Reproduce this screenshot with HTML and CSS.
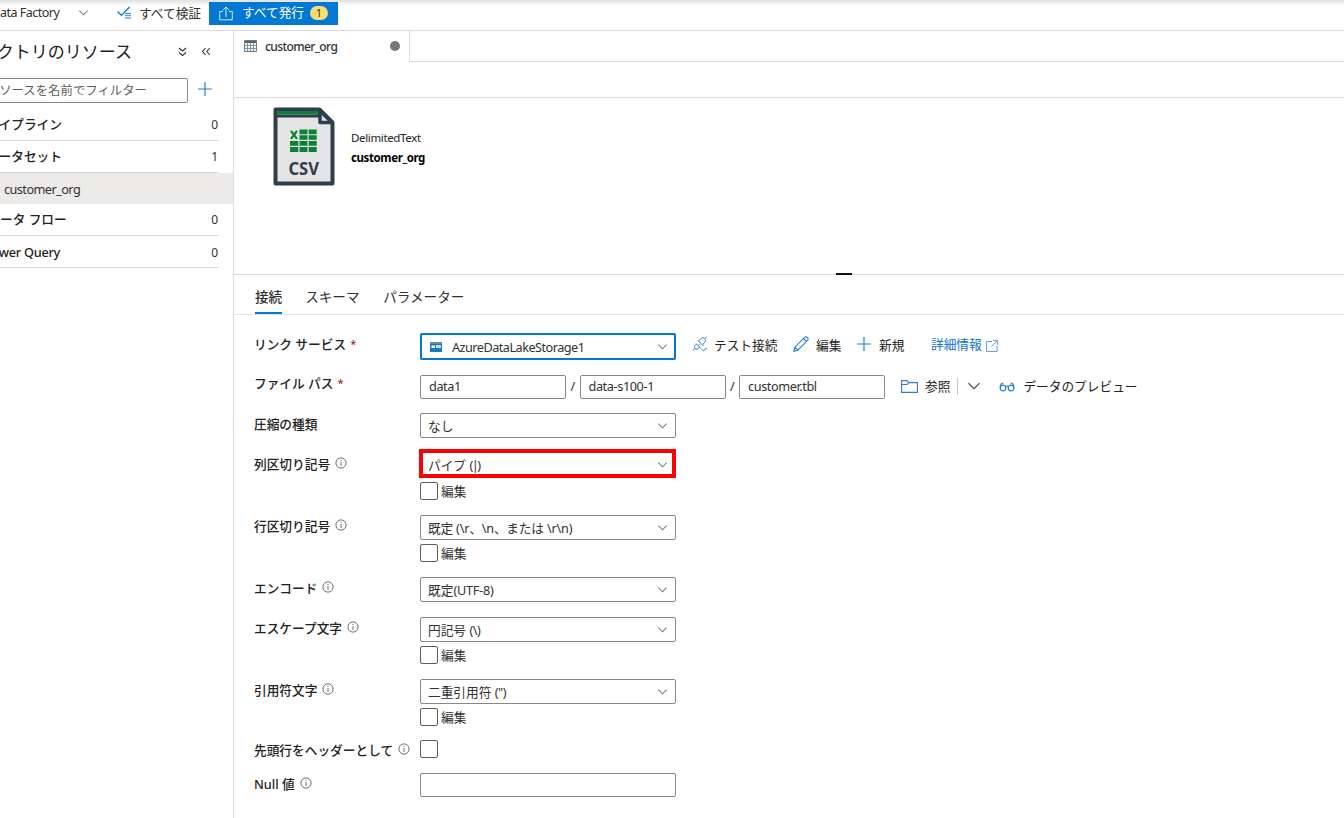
FILE: index.html
```
<!DOCTYPE html>
<html lang="ja">
<head>
<meta charset="utf-8">
<title>Data Factory</title>
<link rel="stylesheet" href="styles.css">
</head>
<body>
<svg width="0" height="0" class="defs">
  <symbol id="chev" viewBox="0 0 12 8"><path d="M1.500 1.500 6 6l4.500-4.500" fill="none" stroke="currentColor" stroke-width="1.100"/></symbol>
  <symbol id="info" viewBox="0 0 12 12"><circle cx="6" cy="6" r="5.100" fill="none" stroke="currentColor" stroke-width=".9"/><path d="M6 5v4M6 3v1" stroke="currentColor" stroke-width=".9"/></symbol>
  <symbol id="plus" viewBox="0 0 14 14"><path d="M7 0v14M0 7h14" stroke="currentColor" stroke-width="1.200"/></symbol>
  <symbol id="grid" viewBox="0 0 13 12"><path d="M.5.500h12v11H.500z" fill="#eef4f8" stroke="#737b82"/><path d="M1 1h11v2H1z" fill="#59656f"/><path d="M3.500 3v8M6.500 3v8M9.500 3v8M1 5.500h11M1 8.500h11" stroke="#8297a8"/></symbol>
</svg>
<header class="topbar">
  <span class="brand">ata Factory</span>
  <svg class="brand-chev" width="11" height="8"><use href="#chev"/></svg>
  <svg class="validate-icon" width="15" height="13" viewBox="0 0 15 13"><path d="M.5 5.500 4.500 9.500 12.500 1" fill="none" stroke="#0f6cbd" stroke-width="1.200"/><path d="M8 7.500h6M8 9.700h6M8 12h6" stroke="#2a83d8"/></svg>
  <span class="validate">すべて検証</span>
  <div class="publish">
    <svg width="14" height="15" viewBox="0 0 14 15"><path d="M4 5.500H.700v8.300h12.600V5.500H10M7 11V1M3.800 4.200 7 1l3.200 3.200" fill="none" stroke="#d9eafa"/></svg>
    <span class="publish-text">すべて発行</span>
    <span class="count">1</span>
  </div>
</header>
<div class="body">
  <aside class="side">
    <div class="side-head">
      <span class="side-title">クトリのリソース</span>
      <svg class="collapse-all" width="9" height="10" viewBox="0 0 9 10"><path d="M1 1l3.500 3L8 1M1 5.500l3.500 3 3.500-3" fill="none" stroke="#333" stroke-width="1.100"/></svg>
      <svg width="10" height="9" viewBox="0 0 10 9"><path d="M4.500 1l-3 3.500 3 3.500M8.800 1l-3 3.500 3 3.500" fill="none" stroke="#333" stroke-width="1.100"/></svg>
    </div>
    <div class="side-filter">
      <div class="filter"><span>ソースを名前でフィルター</span></div>
      <svg class="blue filter-add" width="14" height="14"><use href="#plus"/></svg>
    </div>
    <div class="cat"><span class="name">イプライン</span><span>0</span></div>
    <div class="cat"><span class="name">ータセット</span><span>1</span></div>
    <div class="leaf">customer_org</div>
    <div class="cat"><span class="name flow">ータ フロー</span><span>0</span></div>
    <div class="cat last"><span class="name query">wer Query</span><span>0</span></div>
  </aside>
  <main class="main">
    <div class="tabs">
      <div class="tab"><svg width="13" height="12"><use href="#grid"/></svg><span>customer_org</span><i class="dot"></i></div>
      <div class="tab-rest"></div>
    </div>
    <div class="toolbar"></div>
    <section class="summary">
      <svg width="62" height="79" viewBox="0 0 62 79">
        <path d="M2.500 2.500h44l13 13v61h-57z" fill="#e4e4e4" stroke="#2f3e4c" stroke-width="4" stroke-linejoin="round"/>
        <path d="M4 4h42v3.500H4z" fill="#0a8235"/><path d="M4 7.500h42v3H4z" fill="#2f3e4c"/>
        <path d="M47 4v11.500h12z" fill="#e4e4e4" stroke="#2f3e4c" stroke-width="3.500" stroke-linejoin="round"/>
        <path d="M26.500 22.500h8v4.800h-8zM35.700 22.500h8v4.800h-8zM26.500 28.300h8v4.500h-8zM35.700 28.300h8v4.500h-8zM17 34h8.300v4.800H17zM26.500 34h8v4.800h-8zM35.700 34h8v4.800h-8zM17 40h8.300v5H17zM26.500 40h8v5h-8zM35.700 40h8v5h-8z" fill="#0a8235"/>
        <path d="M18 23.800l6 8M24 23.800l-6 8" stroke="#0a8235" stroke-width="2.200"/>
        <text x="15.500" y="68" class="csv" textLength="30.500" lengthAdjust="spacingAndGlyphs">CSV</text>
      </svg>
      <div class="meta"><div class="kind">DelimitedText</div><b>customer_org</b></div>
      <i class="grip"></i>
    </section>
    <nav class="nav"><span class="on">接続</span><span class="schema">スキーマ</span><span>パラメーター</span></nav>
    <form class="form">
      <div class="row r-link">
        <label>リンク サービス<em>*</em></label>
        <div class="select focus">
          <svg width="12" height="10" viewBox="0 0 12 10"><path d="M0 0h12v10H0z" fill="#1b78be"/><path d="M0 0h12v2H0z" fill="#7a858e"/><path d="M1.500 3.500h3.500v2.500H1.500z" fill="#fff"/><path d="M6 3h5v3H6z" fill="#b9dcf5"/></svg>
          <span class="azure">AzureDataLakeStorage1</span>
          <svg class="chev" width="11" height="8"><use href="#chev"/></svg>
        </div>
        <div class="actions">
          <svg width="16" height="16" viewBox="0 0 16 16"><g fill="none" stroke="#2a7fd0"><path d="M.8 14.500 3 12.300M4 7.500 9 12.500M4.700 8.200C2.300 9.500 1.800 11.300 3 12.500s3 .7 4.800-1.300M6.300 9.800l1.500-1.500M6 4.500 11.500 10M6.500 5l2.300-2.300c1.300-1.300 2.800-1.300 3.900-.2s1.200 2.700-.1 4L10.500 8.800M12.700 2.500 14.500.700M9.500 13l1.800 1.800L15 12"/></g></svg>
          <span class="act test">テスト接続</span>
          <svg class="pen" width="16" height="16" viewBox="0 0 16 16"><path d="M.800 15.200l1-4L11.600 1.400c1.800-1.600 4.600.8 3 3L4.800 14.200zM10.500 2.500l3 3M1.800 11.200l3 3" fill="none" stroke="#2a7fd0" stroke-width="1.100"/></svg>
          <span class="act edit">編集</span>
          <svg class="blue" width="14" height="14"><use href="#plus"/></svg>
          <span class="act new">新規</span>
          <span class="act more">詳細情報</span>
          <svg class="ext" width="12" height="12" viewBox="0 0 12 12"><path d="M6 1.500H.600v9.900h10.500V6M7 .600h4.400V5M11.400.600 5.500 6.500" fill="none" stroke="#5b9fe0"/></svg>
        </div>
      </div>
      <div class="row r-path">
        <label>ファイル パス<em>*</em></label>
        <div class="input"><span>data1</span></div><i class="slash">/</i>
        <div class="input"><span>data-s100-1</span></div><i class="slash">/</i>
        <div class="input"><span>customer.tbl</span></div>
        <div class="actions">
          <svg class="folder" width="17" height="13" viewBox="0 0 17 13"><path d="M.600 12.400V.600h5.500l1.700 2h8.600v9.800zM.600 4.500h5.500l1.700-1.900" fill="none" stroke="#2a7fd0" stroke-width="1.100"/></svg>
          <span class="act browse">参照</span><i class="bar"></i>
          <svg class="bigchev" width="14" height="9" viewBox="0 0 12 8"><path d="M1 1l5 5 5-5" fill="none" stroke="#444"/></svg>
          <svg class="glasses" width="16" height="11" viewBox="0 0 16 11"><circle cx="4" cy="7" r="2.800"/><circle cx="12" cy="7" r="2.800"/><path d="M6.500 5.500Q8 4.500 9.500 5.500M1.200 6.500C1.300 4 2.500 2 4.500 2M14.800 6.500C14.700 4 13.500 2 11.500 2"/></svg>
          <span class="act preview">データのプレビュー</span>
        </div>
      </div>
      <div class="row r-comp"><label>圧縮の種類</label><div class="select"><span>なし</span><svg class="chev" width="11" height="8"><use href="#chev"/></svg></div></div>
      <div class="row r-tall"><label>列区切り記号<svg width="12" height="12"><use href="#info"/></svg></label>
        <div><div class="select marked"><span>パイプ <q class="pipe">(|)</q></span><svg class="chev" width="11" height="8"><use href="#chev"/></svg></div><div class="check"><i></i><span>編集</span></div></div></div>
      <div class="row r-tall"><label>行区切り記号<svg width="12" height="12"><use href="#info"/></svg></label>
        <div><div class="select"><span class="newline">既定 (\r、\n、または \r\n)</span><svg class="chev" width="11" height="8"><use href="#chev"/></svg></div><div class="check"><i></i><span>編集</span></div></div></div>
      <div class="row r-comp"><label>エンコード<svg width="12" height="12"><use href="#info"/></svg></label><div class="select"><span>既定<q class="utf">(UTF-8)</q></span><svg class="chev" width="11" height="8"><use href="#chev"/></svg></div></div>
      <div class="row r-tall"><label>エスケープ文字<svg width="12" height="12"><use href="#info"/></svg></label>
        <div><div class="select"><span>円記号 <q>(\)</q></span><svg class="chev" width="11" height="8"><use href="#chev"/></svg></div><div class="check"><i></i><span>編集</span></div></div></div>
      <div class="row r-quote"><label>引用符文字<svg width="12" height="12"><use href="#info"/></svg></label>
        <div><div class="select"><span>二重引用符 <q>(")</q></span><svg class="chev" width="11" height="8"><use href="#chev"/></svg></div><div class="check"><i></i><span>編集</span></div></div></div>
      <div class="row r-head"><label>先頭行をヘッダーとして<svg width="12" height="12"><use href="#info"/></svg></label><div class="check solo"><i></i></div></div>
      <div class="row r-null"><label>Null 値<svg width="12" height="12"><use href="#info"/></svg></label><div class="input wide"></div></div>
    </form>
  </main>
</div>
</body>
</html>
```
FILE: styles.css
```
* { box-sizing: border-box; }
body { margin: 0; width: 1344px; height: 818px; overflow: hidden; background: #fff; color: #323130; font: 12.7px/18px "Noto Sans", "Noto Sans CJK JP", sans-serif; display: flex; flex-direction: column; white-space: nowrap; }
svg { display: block; flex: none; }
.defs { position: absolute; }
i, em { font-style: normal; }
q { quotes: none; letter-spacing: -.5px; }
.pipe { letter-spacing: -1.5px; }
.utf { letter-spacing: -.25px; }
.blue { color: #2a7fd0; }

.topbar { height: 31px; flex: none; display: flex; align-items: center; padding-bottom: 5px; border-bottom: 1px solid #dcdcdc; background: linear-gradient(#e2e2e2, #fff 6px); }
.brand { width: 58px; font-size: 12.5px; letter-spacing: -.5px; }
.brand-chev { margin-left: 20px; color: #777; }
.validate-icon { margin-left: 28px; }
.validate { margin-left: 7px; width: 70px; }
.publish { width: 129px; height: 23px; margin-top: 1px; background: #0078d4; color: #fff; display: flex; align-items: center; padding-left: 10px; }
.publish-text { margin: -2px 0 0 9px; width: 68px; }
.count { width: 18px; height: 14px; border-radius: 7px; background: #f9dc72; color: #333; font-size: 11px; line-height: 14px; text-align: center; }

.body { flex: 1; display: flex; min-height: 0; }
.side { width: 234px; flex: none; border-right: 1px solid #dcdcdc; }
.side-head { height: 41px; display: flex; align-items: center; font-size: 17px; color: #222; }
.side-title { width: 132px; display: flex; justify-content: flex-end; padding-top: 1px; }
.collapse-all { margin: 0 14px 0 46px; }
.side-filter { height: 37px; display: flex; align-items: center; gap: 10px; padding-bottom: 2px; }
.filter { width: 188px; height: 25px; margin-top: 1px; border: 1px solid #8a8886; border-left: 0; border-radius: 0 2px 2px 0; color: #605e5c; line-height: 23px; font-size: 12.4px; }
.filter span { display: flex; justify-content: flex-end; width: 147px; }
.filter-add { margin-top: -1px; }
.cat { width: 218px; height: 32px; border-bottom: 1px solid #d6d6d6; display: flex; align-items: center; justify-content: space-between; font-size: 12px; }
.name { width: 62px; display: flex; justify-content: flex-end; font-size: 12.7px; font-weight: 500; margin-top: -2px; color: #222; }
.flow { width: 66px; display: block; }
.query { width: 60px; letter-spacing: -.25px; margin-top: -1px; }
.last { padding-top: 2px; }
.leaf { height: 31px; background: #edebe9; padding-left: 4px; line-height: 32px; letter-spacing: -.55px; }

.main { flex: 1; min-width: 0; }
.tabs { height: 31px; display: flex; }
.tab { width: 176px; border-right: 1px solid #dcdcdc; display: flex; align-items: center; padding: 0 0 2px 10px; font-size: 12px; font-weight: 500; letter-spacing: -.6px; }
.tab span { margin-left: 8px; width: 125px; padding-top: 3px; }
.dot { width: 10px; height: 10px; border-radius: 5px; background: #777; }
.tab-rest { flex: 1; border-bottom: 1px solid #dcdcdc; }
.toolbar { height: 36px; border-bottom: 1px solid #dcdcdc; }
.summary { height: 177px; border-bottom: 1px solid #dcdcdc; position: relative; display: flex; padding: 9px 0 0 39px; color: #222; font-size: 11.5px; }
.csv { font: bold 18px "Noto Sans", sans-serif; fill: #2f3e4c; }
.meta { margin: 21px 0 0 16px; line-height: 20px; letter-spacing: -.35px; }
.kind { height: 21px; }
.meta b { display: block; margin-top: -1px; color: #000; letter-spacing: -.4px; }
.grip { position: absolute; left: 602px; bottom: -1px; width: 16px; height: 2px; background: #111; }
.nav { height: 40px; border-bottom: 1px solid #e3e3e3; padding-left: 21px; display: flex; font-size: 13.6px; line-height: 43px; }
.nav .on { font-weight: 500; border-bottom: 2px solid #0078d4; }
.schema { margin: 0 23px 0 23px; width: 55px; }

.form { padding: 18px 0 0 21px; color: #323130; }
.row { display: flex; align-items: flex-start; }
.row label { width: 166px; margin-left: -1px; flex: none; display: flex; align-items: center; height: 22px; font-weight: 500; color: #222; }
label em { color: #a4262c; margin-left: 4px; font-size: 11px; }
label svg { margin: -2px 0 0 5px; color: #605e5c; }
.r-link { height: 42px; }
.r-path { height: 38px; }
.r-comp { height: 40px; }
.r-tall { height: 62px; }
.r-quote { height: 61px; }
.r-head { height: 33px; }
.row.r-path label { height: 16px; }
.row.r-head label { height: 19px; }
.select { width: 256px; height: 25px; border: 1px solid #8a8886; border-radius: 2px; padding: 0 7px; display: flex; align-items: center; justify-content: space-between; }
.select .chev { color: #777; }
.focus { height: 27px; border: 2px solid #0078d4; padding: 0 6px 0 8px; }
.azure { flex: 1; margin-left: 10px; letter-spacing: -.52px; }
.marked { width: 257px; height: 29px; margin: -4px 0 0 -1px; border: 4px solid #f00; border-radius: 0; padding: 2px 4px 0 5px; }
.newline { letter-spacing: -.2px; }
.input { width: 146px; height: 24px; border: 1px solid #8a8886; border-radius: 2px; padding: 0 8px; line-height: 21px; letter-spacing: -.4px; }
.wide { width: 256px; }
.slash { width: 13.5px; text-align: center; line-height: 23px; }
.check { display: flex; height: 18px; margin-top: 4px; }
.check i { width: 18px; height: 18px; border: 1px solid #605e5c; border-radius: 2px; margin-right: 3px; }
.check span { line-height: 18px; }
.solo { margin-top: 0; }
.actions { display: flex; align-items: center; height: 22px; margin-left: 16px; color: #222; }
.test { margin: 1px 15px 0 6px; width: 64px; }
.edit { margin: 1px 15px 0 7px; width: 26px; }
.new { margin: 1px 26px 0 8px; width: 26px; }
.more { color: #0f75d0; width: 51px; }
.ext { margin: 3px 0 0 4px; }
.browse { margin: 0 7px 0 7px; }
.bar { width: 1px; height: 17px; background: #c8c6c4; margin-right: 9px; }
.glasses { margin: 0 8px 0 18px; fill: none; stroke: #2a7fd0; stroke-width: 1.200; }
```
